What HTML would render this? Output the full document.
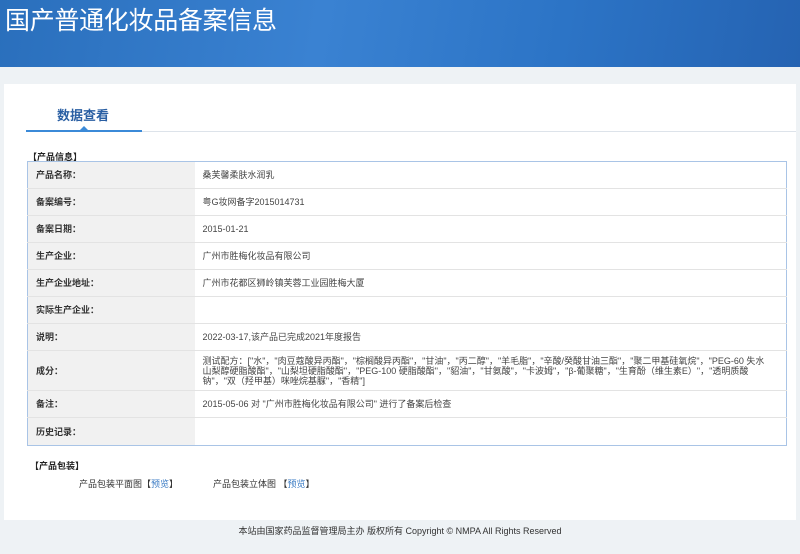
<!DOCTYPE html>
<html><head><meta charset="utf-8"><style>
*{margin:0;padding:0;box-sizing:border-box}
body{width:800px;height:554px;background:#eef2f5;font-family:"Liberation Sans","Noto Sans CJK SC",sans-serif;font-size:9px;color:#333;position:relative;overflow:hidden}
.hd{position:absolute;left:0;top:0;width:800px;height:67px;background:linear-gradient(100deg,#2a6fbc 0%,#3a82d2 40%,#2c74c6 70%,#2563b2 100%)}
.hd h1{position:absolute;left:5px;top:1px;font-size:25px;font-weight:normal;color:#fff;letter-spacing:-0.3px}
.panel{position:absolute;left:4px;top:84px;width:792px;height:436px;background:#fff}
.tab{position:absolute;left:53px;top:21px;font-size:13px;color:#2a5fa3;font-weight:bold}
.tl{position:absolute;left:22px;top:46px;width:116px;height:2px;background:#3b8ad8}
.gl{position:absolute;left:138px;top:47px;width:654px;height:1px;background:#dde3ea}
.tri{position:absolute;left:76px;top:42px;width:0;height:0;border-left:4px solid transparent;border-right:4px solid transparent;border-bottom:4px solid #3b8ad8}
.sec{position:absolute;font-weight:bold;font-size:9px;color:#222}
table{position:absolute;left:23px;top:77px;width:760px;border-collapse:collapse;border:1px solid #a9c4e6}
td{border-bottom:1px solid #e3e3e3;padding:0 8px;vertical-align:middle;font-size:9px;line-height:10px}
td.l{width:167px;background:#f1f1f1;font-weight:bold;color:#333}
td.v{color:#444}
.pk{position:absolute;top:393px;font-size:9px}
.pk a{color:#3b7bc4;text-decoration:none}
.ft{position:absolute;top:524px;left:0;width:800px;text-align:center;font-size:9px;color:#333}
</style></head><body>
<div class="hd"><h1>国产普通化妆品备案信息</h1></div>
<div class="panel">
<div class="tab">数据查看</div>
<div class="tl"></div><div class="gl"></div><div class="tri"></div>
<div class="sec" style="left:24px;top:66px">【产品信息】</div>
<table>
<tr style="height:27px"><td class="l">产品名称：</td><td class="v">桑芙馨柔肤水润乳</td></tr>
<tr style="height:27px"><td class="l">备案编号：</td><td class="v">粤G妆网备字2015014731</td></tr>
<tr style="height:27px"><td class="l">备案日期：</td><td class="v">2015-01-21</td></tr>
<tr style="height:27px"><td class="l">生产企业：</td><td class="v">广州市胜梅化妆品有限公司</td></tr>
<tr style="height:27px"><td class="l">生产企业地址：</td><td class="v">广州市花都区狮岭镇芙蓉工业园胜梅大厦</td></tr>
<tr style="height:27px"><td class="l">实际生产企业：</td><td class="v"></td></tr>
<tr style="height:27px"><td class="l">说明：</td><td class="v">2022-03-17,该产品已完成2021年度报告</td></tr>
<tr style="height:40px"><td class="l">成分：</td><td class="v"><div style="width:565px;line-height:10px;font-size:9px">测试配方：["水"，"肉豆蔻酸异丙酯"，"棕榈酸异丙酯"，"甘油"，"丙二醇"，"羊毛脂"，"辛酸/癸酸甘油三酯"，"聚二甲基硅氧烷"，"PEG-60 失水山梨醇硬脂酸酯"，"山梨坦硬脂酸酯"，"PEG-100 硬脂酸酯"，"貂油"，"甘氨酸"，"卡波姆"，"β-葡聚糖"，"生育酚（维生素E）"，"透明质酸钠"，"双（羟甲基）咪唑烷基脲"，"香精"]</div></td></tr>
<tr style="height:27px"><td class="l">备注：</td><td class="v">2015-05-06 对 "广州市胜梅化妆品有限公司" 进行了备案后检查</td></tr>
<tr style="height:28px"><td class="l" style="border-bottom:none">历史记录：</td><td class="v" style="border-bottom:none"></td></tr>
</table>
<div class="sec" style="left:26px;top:375px">【产品包装】</div>
<div class="pk" style="left:75px">产品包装平面图【<a>预览</a>】</div>
<div class="pk" style="left:209px">产品包装立体图 【<a>预览</a>】</div>
</div>
<div class="ft">本站由国家药品监督管理局主办 版权所有 Copyright © NMPA All Rights Reserved</div>
</body></html>
